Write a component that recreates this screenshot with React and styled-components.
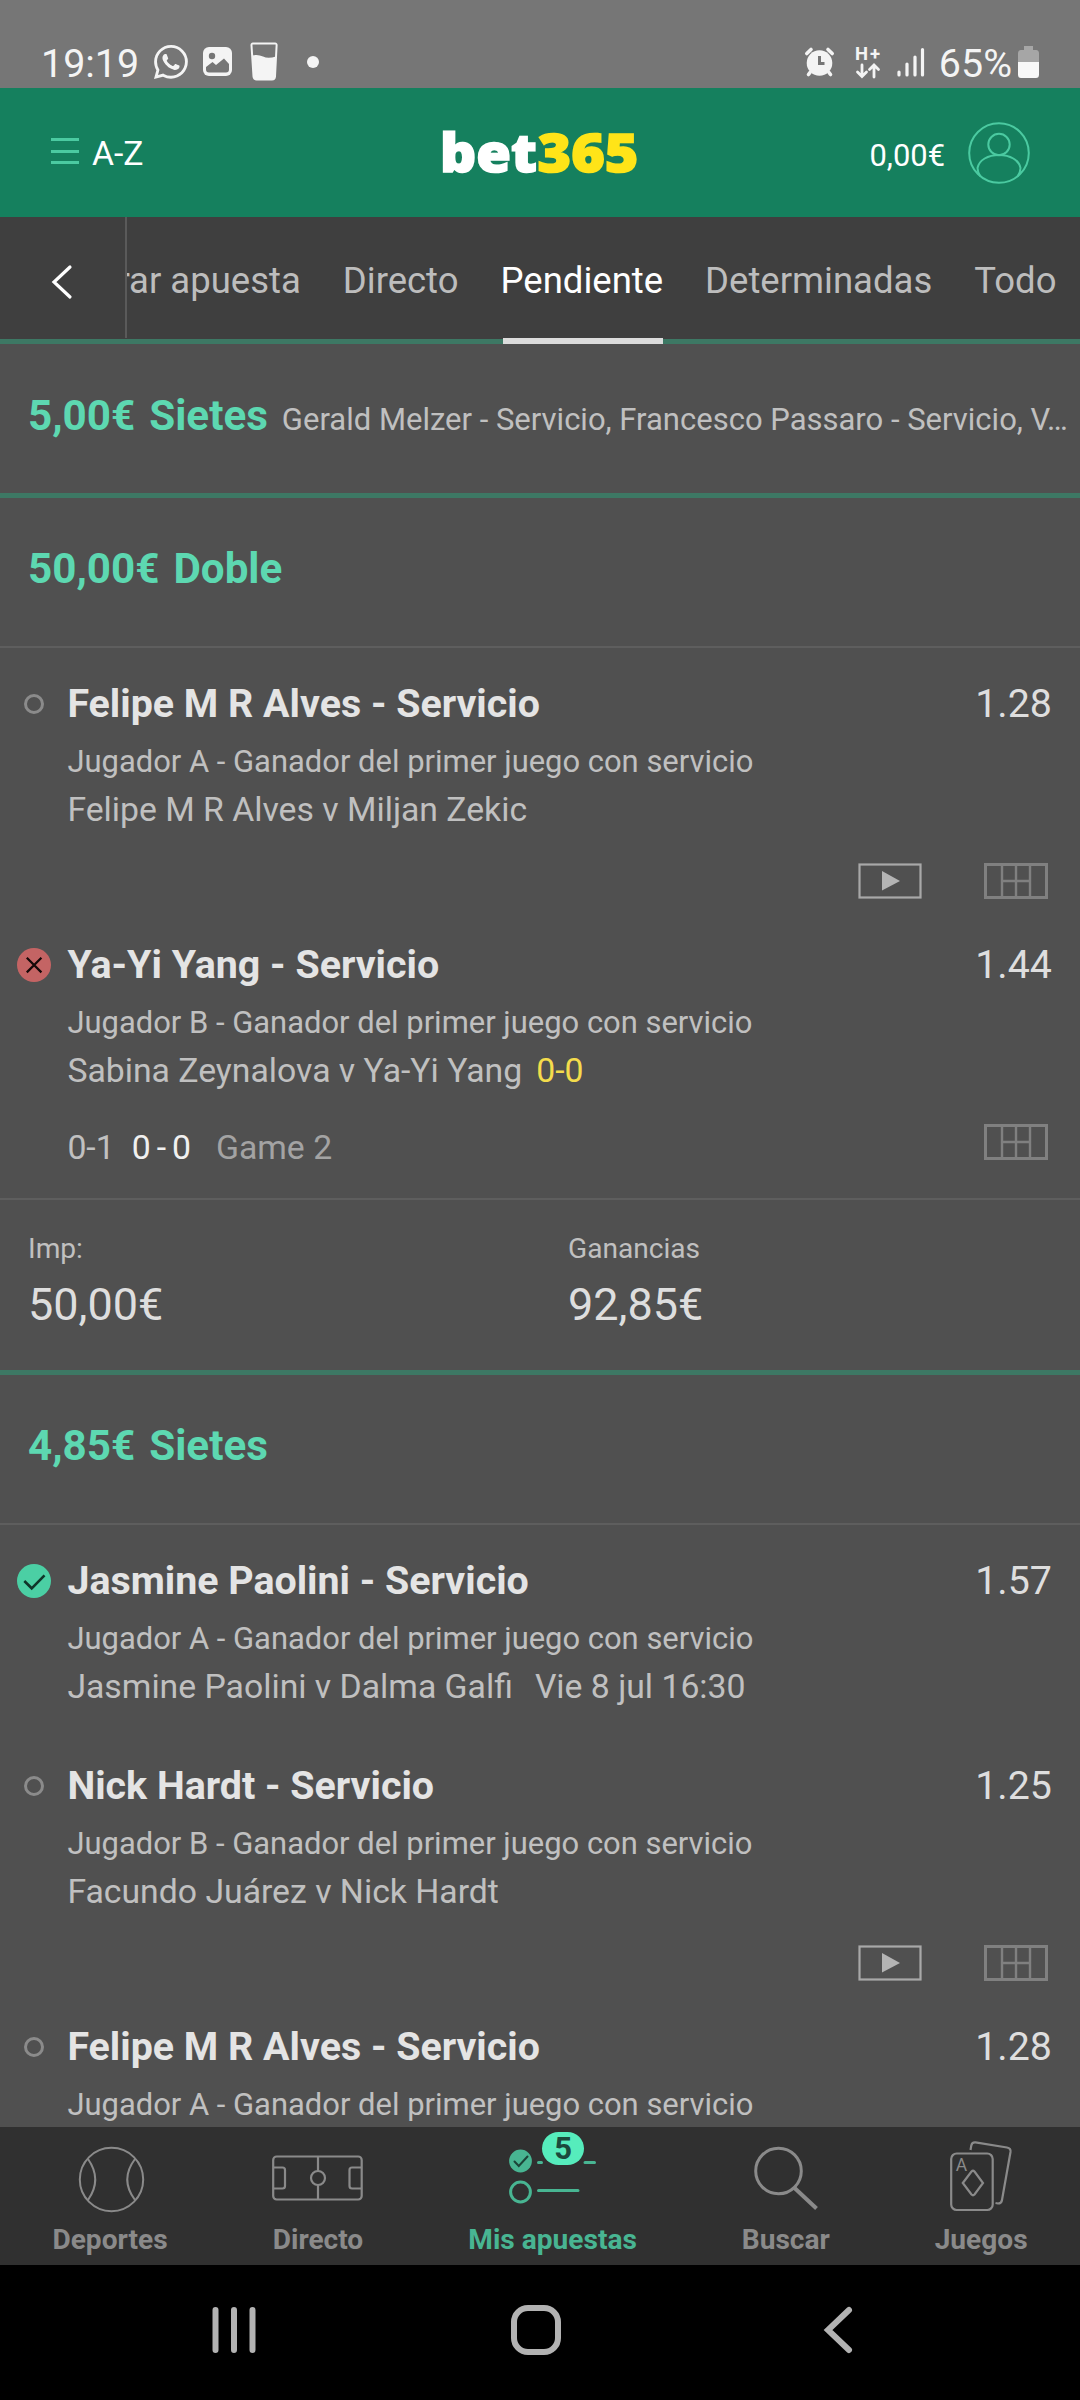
import * as React from 'react';
import styled, { createGlobalStyle, css } from 'styled-components';
import { BsWhatsapp } from 'react-icons/bs';


const color = {
  page: '#505050',
  header: '#15805e',
  bar: '#3f3f3f',
  nav: '#303030',
  rule: '#3d7864',
  divider: '#5e5e5e',
  mint: '#5dd8b1',
  text: '#e4e4e4',
  muted: '#c0c0c0',
  faint: '#a3a3a3',
  score: '#f4dc4c',
};

const GlobalStyle = createGlobalStyle`
  * {
    box-sizing: border-box;
  }

  body {
    margin: 0;
    background: ${color.page};
    font-family: Roboto, 'Liberation Sans', sans-serif;
  }

  svg {
    display: block;
    flex-shrink: 0;
    overflow: visible;
  }
`;

const Screen = styled.div`
  width: 1080px;
  height: 2400px;
  display: flex;
  flex-direction: column;
  background: ${color.page};
  white-space: nowrap;
  overflow: hidden;
`;

/* status bar */

const StatusBar = styled.div`
  flex: 0 0 88px;
  display: flex;
  justify-content: space-between;
  padding-top: 35px;
  padding-left: 41px;
  padding-right: 41px;
  color: #f4f4f4;
  background: #767676;
`;

const StatusGroup = styled.div`
  display: flex;
  align-items: center;
`;

const StatusText = styled.span`
  font-size: 39.4px;
  line-height: 46px;
  padding-top: 4px;
  margin-left: ${props => props.$gap || 0}px;
`;

const StatusIcon = styled.span`
  margin-left: ${props => props.$gap}px;
`;

/* green header */

const Header = styled.header`
  flex: 0 0 129px;
  display: grid;
  grid-template-columns: 1fr 198px 1fr;
  align-items: center;
  background: ${color.header};
  color: #ffffff;
`;

const MenuButton = styled.div`
  display: flex;
  align-items: center;
  padding-top: 2px;
  padding-left: 51px;
  font-size: 33.75px;
`;

const MenuLines = styled.span`
  display: flex;
  flex-direction: column;
  gap: 8.5px;
  width: 28px;
  margin-right: 13px;
  margin-top: -5px;

  i {
    height: 3px;
    background: #4bcaa1;
  }
`;

const Account = styled.div`
  display: flex;
  align-items: center;
  justify-content: flex-end;
  gap: 23px;
  padding-right: 50px;
  font-size: 30.9px;
`;

const Balance = styled.span`
  padding-top: 6px;
`;

/* tabs */

const TabBar = styled.nav`
  flex: 0 0 127px;
  display: flex;
  background: ${color.bar};
  box-shadow: inset 0 -5px 0 ${color.rule};
`;

const BackButton = styled.div`
  flex: 0 0 127px;
  height: 121px;
  display: flex;
  align-items: center;
  padding-top: 9px;
  padding-left: 52px;
  border-right: 2px solid #5a5a5a;
`;

const Tabs = styled.div`
  flex: 1;
  min-width: 0;
  display: flex;
  justify-content: flex-end;
  gap: 42px;
  padding-right: 23.5px;
  overflow: hidden;
`;

const Tab = styled.div`
  position: relative;
  flex-shrink: 0;
  padding-top: 42px;
  font-size: 36.5px;
  line-height: 43px;
  color: ${props => props.$active ? '#ffffff' : '#bdbdbd'};

  ${props => props.$active && css`
    &::after {
      content: '';
      position: absolute;
      left: 2px;
      right: 0;
      bottom: 0;
      height: 6px;
      background: #dcdcdc;
    }
  `}
`;

/* bets */

const BetList = styled.main`
  flex: 1;
  min-height: 0;
  padding-top: 1px;
  overflow: hidden;
`;

const Bet = styled.section`
  border-bottom: 5px solid ${color.rule};
`;

const BetHeader = styled.div`
  height: 148px;
  display: flex;
  align-items: baseline;
  gap: 14px;
  padding-top: 46px;
  padding-left: 28px;
`;

const Stake = styled.span`
  font-size: 42.2px;
  line-height: 50px;
  font-weight: 700;
  color: ${color.mint};
`;

const Summary = styled.span`
  font-size: 31px;
  color: ${color.muted};
`;

const Legs = styled.div`
  border-top: 2px solid ${color.divider};
  padding-bottom: ${props => props.$closed ? 28 : 0}px;
`;

const LegRow = styled.div`
  display: grid;
  grid-template-columns: 67.4px 1fr auto;
  padding-top: 31px;
  padding-right: 28px;
`;

const Marker = styled.div`
  height: 50px;
  display: flex;
  align-items: center;
  justify-content: center;
`;

const PendingRing = styled.span`
  width: 20px;
  height: 20px;
  border: 3px solid #8b8b8b;
  border-radius: 50%;
`;

const Selection = styled.div`
  font-size: 39.375px;
  line-height: 50px;
  font-weight: 700;
  color: ${color.text};
`;

const Odds = styled.div`
  font-size: 39.375px;
  line-height: 50px;
  color: #dedede;
`;

const Market = styled.div`
  margin-top: 10px;
  font-size: 30.94px;
  line-height: 46px;
  color: ${color.muted};
`;

const Fixture = styled.div`
  display: flex;
  padding-top: 1px;
  font-size: 33.75px;
  line-height: 48px;
  color: ${color.muted};
`;

const Score = styled.span`
  margin-left: 14px;
  color: ${color.score};
`;

const Kickoff = styled.span`
  margin-left: 22px;
`;

const LegFooter = styled.div`
  height: ${props => props.$tall ? 75 : 19}px;
  display: flex;
  align-items: center;
  justify-content: flex-end;
  gap: 62px;
  padding-top: ${props => props.$tall ? 19 : 0}px;
  padding-left: 67.4px;
  padding-right: 32px;
`;

const LiveScore = styled.div`
  display: flex;
  margin-right: auto;
  padding-top: 11px;
  font-size: 33.75px;
  color: ${color.muted};
`;

const Points = styled.span`
  display: flex;
  gap: 6px;
  margin-left: 17px;
  margin-right: 25px;
  color: #f0f0f0;
`;

const Period = styled.span`
  color: ${color.faint};
`;

const Totals = styled.div`
  height: 172px;
  display: grid;
  grid-template-columns: 1fr 1fr;
  padding-top: 32px;
  border-top: 2px solid ${color.divider};
`;

const Total = styled.div`
  padding-left: 28px;
  font-size: 28.125px;
  line-height: 34px;
  color: ${color.muted};
`;

const Amount = styled.div`
  margin-top: 13px;
  font-size: 45px;
  line-height: 52px;
  color: #dedede;
`;

/* bottom navigation */

const BottomNav = styled.nav`
  flex: 0 0 138px;
  display: flex;
  justify-content: space-around;
  padding-top: 10px;
  background: ${color.nav};
`;

const NavItem = styled.div`
  display: flex;
  flex-direction: column;
  align-items: center;
  gap: 7px;
  font-size: 28.1px;
  line-height: 32px;
  font-weight: 700;
  color: ${props => props.$active ? '#48b592' : '#8a8a8a'};
`;

const NavIcon = styled.span`
  position: relative;
`;

const Badge = styled.span`
  position: absolute;
  top: -5px;
  left: 33px;
  width: 42px;
  height: 33px;
  border-radius: 17px;
  background: #56ecbc;
  color: #1b4a3c;
  font-size: 31px;
  line-height: 33px;
  text-align: center;
`;

const SystemBar = styled.div`
  flex: 0 0 135px;
  display: flex;
  align-items: center;
  justify-content: center;
  gap: 242px;
  padding-right: 8px;
  padding-bottom: 5px;
  background: #000000;
`;


const Logo = () => (
  <svg width="198" height="60" viewBox="0 0 198 60" fontFamily="'Open Sans', sans-serif" fontWeight="800" fontSize="53">
    <text x="-1" y="48.5" textLength="97" lengthAdjust="spacingAndGlyphs" fill="#ffffff" stroke="#ffffff" strokeWidth="1.6">bet</text>
    <text x="96.5" y="48.5" textLength="101" lengthAdjust="spacingAndGlyphs" fill="#ffe418" stroke="#ffe418" strokeWidth="1.6">365</text>
  </svg>
);

const AvatarIcon = () => (
  <svg width="62" height="62" viewBox="0 0 62 62" fill="none" stroke="#4bcaa1" strokeWidth="2">
    <circle cx="31" cy="31" r="29.8" />
    <circle cx="31" cy="22.5" r="10.7" />
    <path d="M12.5 54.5C10 51 9.5 49 9.5 46C11 38 20 33 31 33S51 38 52.5 46C52.5 49 52 51 49.5 54.5" />
  </svg>
);

const ImageIcon = () => (
  <svg width="29" height="29" viewBox="0 0 29 29">
    <rect width="29" height="29" rx="6" fill="#f4f4f4" />
    <circle cx="9" cy="9" r="3.2" fill="#767676" />
    <path d="M3 20L9.5 15L13 18L21 11.5L26 17V22.5Q26 25.5 23 25.5H6Q3 25.5 3 22.5Z" fill="#767676" />
  </svg>
);

const GlassIcon = () => (
  <svg width="28" height="39" viewBox="0 0 28 39">
    <path d="M3 1.5H25Q26.8 1.5 26.6 3.5L25 34.5Q24.8 37.5 22 37.5H6.5Q3.8 37.5 3.5 34.5L1.5 3.5Q1.3 1.5 3 1.5Z" fill="none" stroke="#f4f4f4" strokeWidth="2" />
    <path d="M2 13.5Q8 12 13 14.5T26 14.5L25 34.5Q24.5 37.5 22 37.5H6.5Q3.8 37.5 3.5 34.5Z" fill="#f4f4f4" />
  </svg>
);

const AlarmIcon = () => (
  <svg width="29" height="30" viewBox="0 0 29 30" fill="none" strokeLinecap="round" stroke="#f4f4f4">
    <circle cx="14.5" cy="16" r="12.8" fill="#f4f4f4" stroke="none" />
    <path d="M1.8 6.5L6 2.5M27.2 6.5L23 2.5" strokeWidth="3.6" />
    <path d="M5 25.5L3.5 27.5M24 25.5L25.5 27.5" strokeWidth="3.6" />
    <path d="M14.5 9V16.5H19.5" stroke="#767676" strokeWidth="3" strokeLinecap="butt" />
  </svg>
);

const NetworkIcon = () => (
  <svg width="24" height="32" viewBox="0 0 24 32">
    <text x="-1" y="14" fontSize="18.5" fontWeight="700" textLength="25" fill="#f4f4f4">H+</text>
    <path d="M6 19V30M1.5 26L6 30.5L10.5 26M18 31V19.5M13.5 23.5L18 19L22.5 23.5" fill="none" stroke="#f4f4f4" strokeWidth="2.8" strokeLinecap="round" />
  </svg>
);

const SignalIcon = () => (
  <svg width="28" height="30" viewBox="0 0 28 30" stroke="#f4f4f4" strokeWidth="3.2" strokeLinecap="round">
    <path d="M2 25V28M10 17V28M18 10V28M25.5 2.5V28" />
  </svg>
);

const BatteryIcon = () => (
  <svg width="21" height="32" viewBox="0 0 21 32">
    <path d="M6 0H15V4H18Q21 4 21 7.5V17H0V7.5Q0 4 3 4H6Z" fill="#a6a6a6" />
    <path d="M0 16H21V28.5Q21 32 18 32H3Q0 32 0 28.5Z" fill="#f8f8f8" />
  </svg>
);

const LostIcon = () => (
  <svg width="34" height="34" viewBox="0 0 34 34">
    <circle cx="17" cy="17" r="17" fill="#c46464" />
    <path d="M9.8 9.8L24.4 24.4M24.4 9.8L9.8 24.4" stroke="#140808" strokeWidth="2.2" />
  </svg>
);

const WonIcon = () => (
  <svg width="34" height="34" viewBox="0 0 34 34">
    <circle cx="17" cy="17" r="17" fill="#4bcfa4" />
    <path d="M7.3 17L14.7 24.3L27.5 11.3" fill="none" stroke="#10352a" strokeWidth="2.6" />
  </svg>
);

const PlayIcon = () => (
  <svg width="64" height="36" viewBox="0 0 64 36">
    <rect x="1.5" y="1.5" width="61" height="33" fill="none" stroke="#a8a8a8" strokeWidth="2.2" />
    <path d="M24 8L42 18L24 27.5Z" fill="#b4b4b4" />
  </svg>
);

const CourtIcon = () => (
  <svg width="64" height="36" viewBox="0 0 64 36" fill="none" stroke="#808080">
    <rect x="1.5" y="1.5" width="61" height="33" strokeWidth="3" />
    <path d="M18 2V34M32 2V34M46 2V34M18 18H46" strokeWidth="2.4" />
  </svg>
);

const BallIcon = () => (
  <svg width="65" height="80" viewBox="0 0 65 80" fill="none" stroke="#8a8a8a" strokeWidth="2">
    <circle cx="33.5" cy="42.5" r="31.7" />
    <path d="M10 22Q24.5 42.5 10 63M57 22Q41.5 42.5 57 63" />
  </svg>
);

const PitchIcon = () => (
  <svg width="91" height="80" viewBox="0 0 91 80" fill="none" stroke="#8a8a8a" strokeWidth="2.2">
    <rect x="1.2" y="19.5" width="88.5" height="43" rx="3.5" />
    <path d="M1.2 30.5H10.5Q13 30.5 13 33V49Q13 51.5 10.5 51.5H1.2M89.7 30.5H80Q77.5 30.5 77.5 33V49Q77.5 51.5 80 51.5H89.7" />
    <circle cx="46" cy="41" r="7" />
    <path d="M46 19.5V34M46 48V62.5" />
  </svg>
);

const BetsIcon = () => (
  <svg width="87" height="80" viewBox="0 0 87 80" fill="none" stroke="#48b592" strokeWidth="3" strokeLinecap="round">
    <circle cx="11.5" cy="24" r="11.4" fill="#48b592" stroke="none" />
    <path d="M5.5 24.5L9.8 29L18.5 19.5" stroke="#1c4438" strokeWidth="2" />
    <circle cx="11.5" cy="55" r="9.9" />
    <path d="M29.5 25.5H32.5M76 25.5H85.5M29.5 53.5H69" />
  </svg>
);

const SearchIcon = () => (
  <svg width="64" height="80" viewBox="0 0 64 80" fill="none" stroke="#8a8a8a">
    <circle cx="24.5" cy="34" r="22.8" strokeWidth="3" />
    <path d="M40 50.5L62.5 71.5" strokeWidth="4" />
  </svg>
);

const CardsIcon = () => (
  <svg width="62" height="80" viewBox="0 0 62 80" fill="none" stroke="#8a8a8a" strokeWidth="2.2">
    <rect x="1.2" y="16.5" width="41.5" height="56.5" rx="5.5" />
    <path d="M20.5 13L21.3 8.5Q22 5 25.5 5.4L57 10.5Q61 11.2 60.5 15L52 63Q51.5 66.5 48 66.5L45.5 66" />
    <path d="M12.8 46L21.5 34.5Q23 33 24.5 34.5L33 46L24.5 57.5Q23 59 21.5 57.5Z" />
    <text x="5.8" y="34" fontSize="17.5" fontWeight="400" fill="#8a8a8a" stroke="none">A</text>
  </svg>
);


const bets = [
  {
    stake: '5,00€',
    type: 'Sietes',
    summary: 'Gerald Melzer - Servicio, Francesco Passaro - Servicio, V…',
  },
  {
    stake: '50,00€',
    type: 'Doble',
    legs: [
      {
        status: 'pending',
        selection: 'Felipe M R Alves - Servicio',
        odds: '1.28',
        market: 'Jugador A - Ganador del primer juego con servicio',
        fixture: 'Felipe M R Alves v Miljan Zekic',
        video: true,
        court: true,
      },
      {
        status: 'lost',
        selection: 'Ya-Yi Yang - Servicio',
        odds: '1.44',
        market: 'Jugador B - Ganador del primer juego con servicio',
        fixture: 'Sabina Zeynalova v Ya-Yi Yang',
        score: '0-0',
        live: { sets: '0-1', points: ['0', '-', '0'], period: 'Game 2' },
        court: true,
      },
    ],
    totals: [
      { label: 'Imp:', amount: '50,00€' },
      { label: 'Ganancias', amount: '92,85€' },
    ],
  },
  {
    stake: '4,85€',
    type: 'Sietes',
    legs: [
      {
        status: 'won',
        selection: 'Jasmine Paolini - Servicio',
        odds: '1.57',
        market: 'Jugador A - Ganador del primer juego con servicio',
        fixture: 'Jasmine Paolini v Dalma Galfi',
        kickoff: 'Vie 8 jul 16:30',
      },
      {
        status: 'pending',
        selection: 'Nick Hardt - Servicio',
        odds: '1.25',
        market: 'Jugador B - Ganador del primer juego con servicio',
        fixture: 'Facundo Juárez v Nick Hardt',
        video: true,
        court: true,
      },
      {
        status: 'pending',
        selection: 'Felipe M R Alves - Servicio',
        odds: '1.28',
        market: 'Jugador A - Ganador del primer juego con servicio',
      },
    ],
  },
];

const tabs = ['Cerrar apuesta', 'Directo', 'Pendiente', 'Determinadas', 'Todo'];

const navItems = [
  { label: 'Deportes', Icon: BallIcon },
  { label: 'Directo', Icon: PitchIcon },
  { label: 'Mis apuestas', Icon: BetsIcon, count: 5 },
  { label: 'Buscar', Icon: SearchIcon },
  { label: 'Juegos', Icon: CardsIcon },
];


const Leg = ({ leg }) => (
  <div>
    <LegRow>
      <Marker>
        { leg.status === 'pending' && <PendingRing /> }
        { leg.status === 'lost' && <LostIcon /> }
        { leg.status === 'won' && <WonIcon /> }
      </Marker>
      <div>
        <Selection>{ leg.selection }</Selection>
        <Market>{ leg.market }</Market>
        {
          leg.fixture && (
            <Fixture>
              { leg.fixture }
              { leg.score && <Score>{ leg.score }</Score> }
              { leg.kickoff && <Kickoff>{ leg.kickoff }</Kickoff> }
            </Fixture>
          )
        }
      </div>
      <Odds>{ leg.odds }</Odds>
    </LegRow>
    <LegFooter $tall={ leg.court }>
      {
        leg.live && (
          <LiveScore>
            { leg.live.sets }
            <Points>
              { leg.live.points.map((point, i) => <span key={ i }>{ point }</span>) }
            </Points>
            <Period>{ leg.live.period }</Period>
          </LiveScore>
        )
      }
      { leg.video && <PlayIcon /> }
      { leg.court && <CourtIcon /> }
    </LegFooter>
  </div>
);

const App = () => (
  <Screen>
    <GlobalStyle />
    <StatusBar>
      <StatusGroup>
        <StatusText>19:19</StatusText>
        <StatusIcon $gap={ 15 }><BsWhatsapp size={ 34 } /></StatusIcon>
        <StatusIcon $gap={ 15 }><ImageIcon /></StatusIcon>
        <StatusIcon $gap={ 18 }><GlassIcon /></StatusIcon>
        <StatusIcon $gap={ 29 }>
          <svg width="12" height="12"><circle cx="6" cy="6" r="6" fill="#f4f4f4" /></svg>
        </StatusIcon>
      </StatusGroup>
      <StatusGroup>
        <StatusIcon $gap={ 0 }><AlarmIcon /></StatusIcon>
        <StatusIcon $gap={ 22 }><NetworkIcon /></StatusIcon>
        <StatusIcon $gap={ 17 }><SignalIcon /></StatusIcon>
        <StatusText $gap={ 14 }>65%</StatusText>
        <StatusIcon $gap={ 6 }><BatteryIcon /></StatusIcon>
      </StatusGroup>
    </StatusBar>
    <Header>
      <MenuButton>
        <MenuLines><i /><i /><i /></MenuLines>
        A-Z
      </MenuButton>
      <Logo />
      <Account>
        <Balance>0,00€</Balance>
        <AvatarIcon />
      </Account>
    </Header>
    <TabBar>
      <BackButton>
        <svg width="20" height="34" viewBox="0 0 20 34" fill="none" stroke="#ffffff" strokeWidth="3.2" strokeLinecap="round">
          <path d="M18 2L2 17L18 32" />
        </svg>
      </BackButton>
      <Tabs>
        { tabs.map((tab) => <Tab key={ tab } $active={ tab === 'Pendiente' }>{ tab }</Tab>) }
      </Tabs>
    </TabBar>
    <BetList>
      {
        bets.map((bet) => (
          <Bet key={ bet.stake }>
            <BetHeader>
              <Stake>{ bet.stake }</Stake>
              <Stake>{ bet.type }</Stake>
              { bet.summary && <Summary>{ bet.summary }</Summary> }
            </BetHeader>
            {
              bet.legs && (
                <Legs $closed={ Boolean(bet.totals) }>
                  { bet.legs.map((leg) => <Leg leg={ leg } key={ leg.selection } />) }
                </Legs>
              )
            }
            {
              bet.totals && (
                <Totals>
                  {
                    bet.totals.map((total) => (
                      <Total key={ total.label }>
                        { total.label }
                        <Amount>{ total.amount }</Amount>
                      </Total>
                    ))
                  }
                </Totals>
              )
            }
          </Bet>
        ))
      }
    </BetList>
    <BottomNav>
      {
        navItems.map(({ label, Icon, count }) => (
          <NavItem key={ label } $active={ Boolean(count) }>
            <NavIcon>
              <Icon />
              { count && <Badge>{ count }</Badge> }
            </NavIcon>
            { label }
          </NavItem>
        ))
      }
    </BottomNav>
    <SystemBar>
      <svg width="60" height="60" viewBox="0 0 60 60" stroke="#b2b2b2" strokeWidth="6" strokeLinecap="round">
        <path d="M11.500 10V50M30 10V50M48.500 10V50" />
      </svg>
      <svg width="60" height="60" viewBox="0 0 60 60" fill="none" stroke="#b2b2b2" strokeWidth="6">
        <rect x="8" y="8" width="44" height="44" rx="14" />
      </svg>
      <svg width="60" height="60" viewBox="0 0 60 60" fill="none" stroke="#b2b2b2" strokeWidth="6" strokeLinecap="round">
        <path d="M41 10L20 30L41 50" />
      </svg>
    </SystemBar>
  </Screen>
);

export default App;
